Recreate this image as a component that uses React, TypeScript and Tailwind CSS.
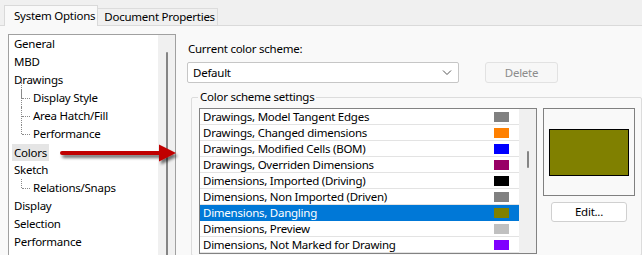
import { ReactNode } from "react"

type Scheme = { label: string; color: string; selected?: boolean }

const schemes: Scheme[] = [
  { label: "Drawings, Model Tangent Edges", color: "bg-[#808080]" },
  { label: "Drawings, Changed dimensions", color: "bg-[#ff8000]" },
  { label: "Drawings, Modified Cells (BOM)", color: "bg-[#0000ff]" },
  { label: "Drawings, Overriden Dimensions", color: "bg-[#990066]" },
  { label: "Dimensions, Imported (Driving)", color: "bg-[#000000]" },
  { label: "Dimensions, Non Imported (Driven)", color: "bg-[#808080]" },
  { label: "Dimensions, Dangling", color: "bg-[#808000]", selected: true },
  { label: "Dimensions, Preview", color: "bg-[#c0c0c0]" },
  { label: "Dimensions, Not Marked for Drawing", color: "bg-[#8000ff]" },
]

const App = () => {
  return (
    <div className="relative w-[642px] h-[255px] overflow-hidden bg-[#f0f0f0] text-[11.5px] tracking-[-0.25px] text-black font-['Noto_Sans',sans-serif]">
      {/* tab strip */}
      <div className="flex items-end h-[26px] pl-[4px] border-b border-[#dadada]">
        <div className="h-[21px] -mb-px pl-[9px] pr-[2px] leading-[20px] bg-[#f9f9f9] border border-b-0 border-[#d9d9d9]">
          System Options
        </div>
        <div className="h-[17px] pl-[6px] pr-[2px] leading-[16px] bg-[#f0f0f0] border border-b-0 border-l-0 border-[#dcdcdc]">
          Document Properties
        </div>
      </div>

      <div className="flex h-[230px] bg-[#f9f9f9] pl-[8px] pt-[8px]">
        {/* options tree */}
        <div className="flex w-[168px] h-[240px] bg-white border border-[#a0a0a0]">
          <div className="flex-1 pl-[5px]">
            <TreeItem>General</TreeItem>
            <TreeItem>MBD</TreeItem>
            <TreeItem>Drawings</TreeItem>
            <div className="relative">
              <div className="absolute left-[7px] top-[-7px] h-[16px] w-0 border-l border-dotted border-[#8a8a8a]" />
              <SubItem>Display Style</SubItem>
              <SubItem>Area Hatch/Fill</SubItem>
              <SubItem last>Performance</SubItem>
            </div>
            <div className="h-[18px] flex items-center">
              <span className="px-[2px] -ml-[2px] h-[17px] leading-[17px] bg-[#e5e5e5]">Colors</span>
            </div>
            <TreeItem>Sketch</TreeItem>
            <SubItem last>Relations/Snaps</SubItem>
            <TreeItem>Display</TreeItem>
            <TreeItem>Selection</TreeItem>
            <TreeItem>Performance</TreeItem>
          </div>
          <div className="w-[17px] bg-[#f0f0f0] pt-[17px] flex justify-center">
            <div className="w-[2px] h-full bg-[#858585] rounded-full" />
          </div>
        </div>

        {/* right side */}
        <div className="ml-[11px] pt-[7px] flex flex-col">
          <div className="h-[16px] leading-[16px] pl-px">Current color scheme:</div>
          <div className="flex mt-[5px]">
            <div className="flex items-center justify-between w-[272px] h-[21px] pl-[5px] pr-[6px] bg-white border border-[#c6c6c6] rounded-[2px]">
              <span>Default</span>
              <svg width="10" height="6" viewBox="0 0 10 6" fill="none" stroke="#555" strokeWidth="1">
                <path d="M1 0.5 L5 4.5 L9 0.5" />
              </svg>
            </div>
            <div className="ml-[26px] w-[73px] h-[21px] flex items-center justify-center text-[#8c8c8c] bg-[#f7f7f7] border border-[#e2e2e2] rounded-[3px]">
              Delete
            </div>
          </div>

          {/* group box */}
          <div className="relative mt-[14px] ml-[4px] w-[451px] h-[170px] border border-[#dcdcdc] rounded-[2px] flex pl-[7px] pt-[10px]">
            <span className="absolute -top-[9px] left-[6px] px-[2px] bg-[#f9f9f9] leading-[16px]">Color scheme settings</span>

            <div className="flex w-[338px] h-[146px] bg-white border border-[#828282]">
              <div className="flex-1">
                {schemes.map((s) => (
                  <div
                    key={s.label}
                    className={`flex items-center justify-between h-[16px] pl-[3px] pr-[10px] border-b ${s.selected ? "bg-[#0078d7] text-white border-[#0078d7]" : "border-[#e3e3e3]"}`}
                  >
                    <span className="leading-[16px]">{s.label}</span>
                    <span className={`w-[15px] h-[10px] ${s.color}`} />
                  </div>
                ))}
              </div>
              <div className="w-[17px] bg-[#f0f0f0] flex justify-center pt-[42px]">
                <div className="w-[2px] h-[17px] bg-[#858585] rounded-full" />
              </div>
            </div>

            <div className="ml-[6px] flex flex-col items-center">
              <div className="w-[92px] h-[88px] border border-[#808080] flex items-center justify-center">
                <div className="w-[80px] h-[47px] bg-[#808000] border border-black" />
              </div>
              <div className="mt-[6px] w-[76px] h-[20px] flex items-center justify-center bg-white border border-[#d0d0d0] rounded-[3px]">
                Edit...
              </div>
            </div>
          </div>
        </div>
      </div>

      {/* red callout arrow */}
      <svg className="absolute left-[55px] top-[140px]" width="130" height="32" viewBox="0 0 130 32">
        <defs>
          <filter id="shadow" x="-10%" y="-50%" width="130%" height="220%">
            <feGaussianBlur in="SourceAlpha" stdDeviation="1.5" />
            <feOffset dx="2" dy="3" result="b" />
            <feComponentTransfer>
              <feFuncA type="linear" slope="0.55" />
            </feComponentTransfer>
            <feMerge>
              <feMergeNode />
              <feMergeNode in="SourceGraphic" />
            </feMerge>
          </filter>
        </defs>
        <g filter="url(#shadow)" fill="#c00000">
          <rect x="5" y="11" width="104" height="4" rx="2" />
          <path d="M104 4.5 L121 13 L104 21.5 Z" />
        </g>
      </svg>
    </div>
  )
}

export default App

const TreeItem = ({ children }: { children: ReactNode }) => (
  <div className="h-[18px] leading-[18px] whitespace-nowrap">{children}</div>
)

const SubItem = ({ children, last }: { children: ReactNode; last?: boolean }) => (
  <div className="relative h-[18px] leading-[18px] pl-[19px] whitespace-nowrap">
    <div className={`absolute left-[7px] top-0 w-0 border-l border-dotted border-[#8a8a8a] ${last ? "h-[9px]" : "h-[18px]"}`} />
    <div className="absolute left-[8px] top-[9px] w-[8px] border-t border-dotted border-[#8a8a8a]" />
    {children}
  </div>
)
